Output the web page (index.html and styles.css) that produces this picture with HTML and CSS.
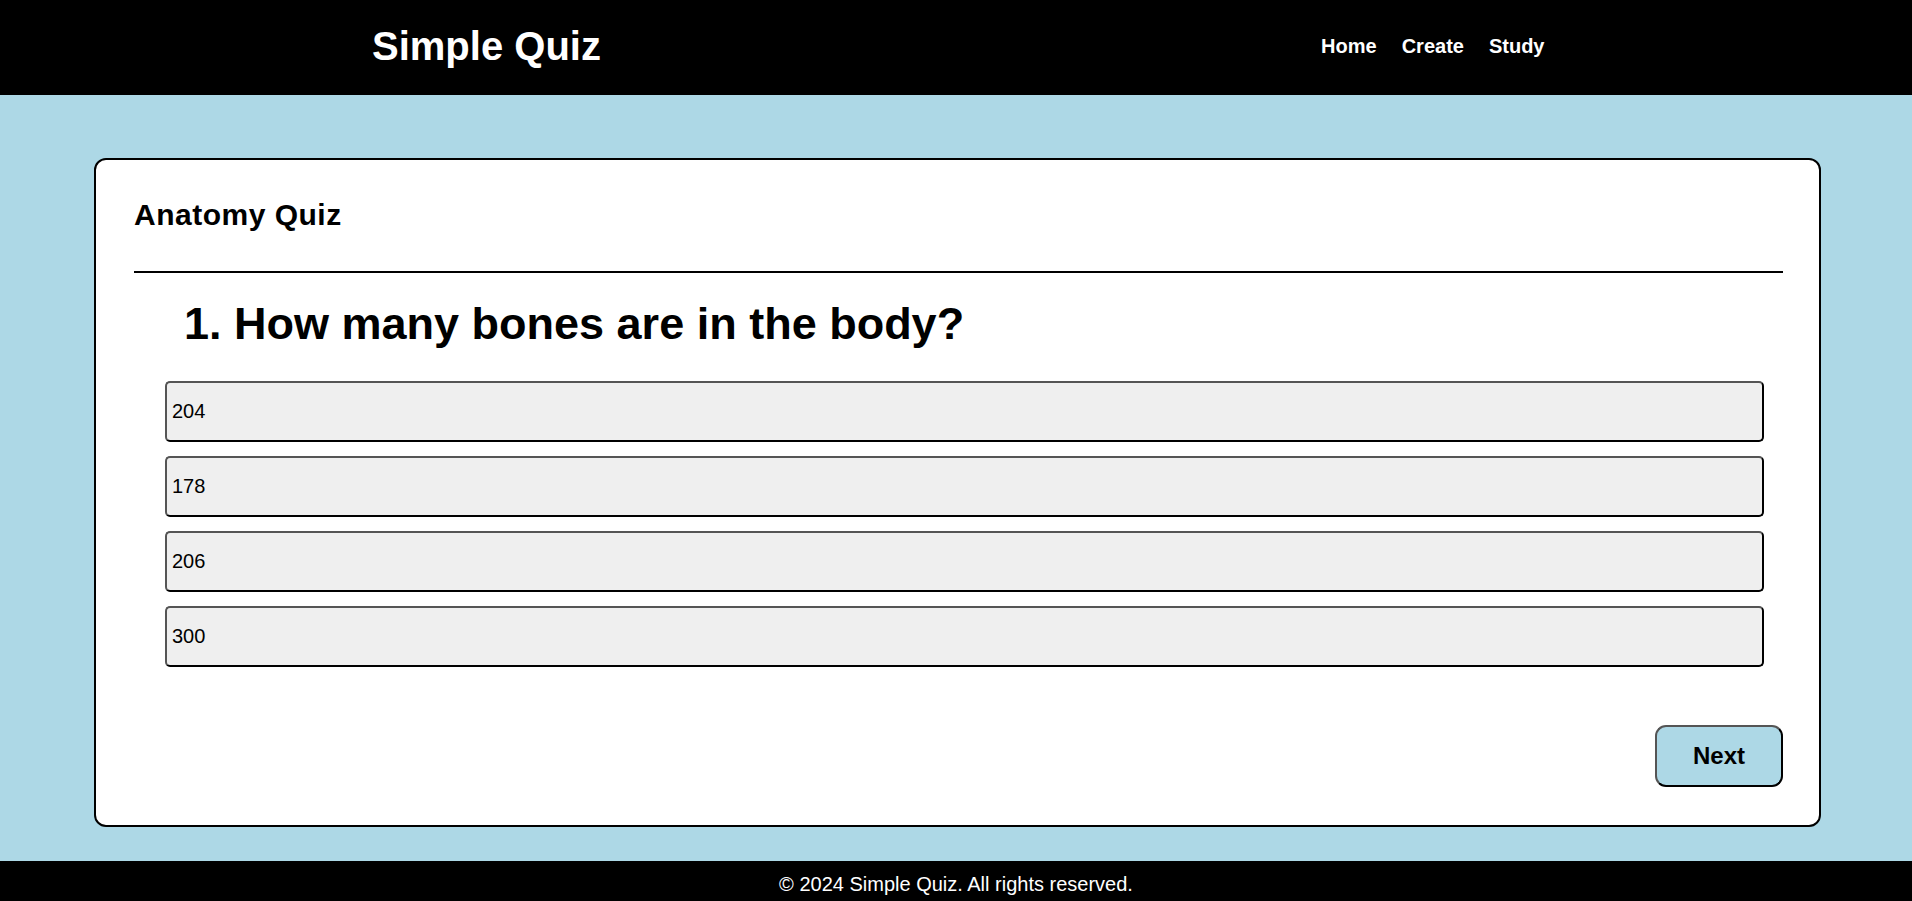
FILE: index.html
```html
<!DOCTYPE html>
<html lang="en">
<head>
<meta charset="utf-8">
<title>Simple Quiz</title>
<link rel="stylesheet" href="styles.css">
</head>
<body>
<header class="site-header">
  <h1 class="brand">Simple Quiz</h1>
  <nav class="nav">
    <a href="#" class="nav-link">Home</a>
    <a href="#" class="nav-link">Create</a>
    <a href="#" class="nav-link">Study</a>
  </nav>
</header>
<main class="main">
  <section class="card">
    <div class="card-head">
      <h2 class="quiz-title">Anatomy Quiz</h2>
    </div>
    <h1 class="question">1. How many bones are in the body?</h1>
    <div class="options">
      <button class="option">204</button>
      <button class="option">178</button>
      <button class="option">206</button>
      <button class="option">300</button>
    </div>
    <div class="actions">
      <button class="next">Next</button>
    </div>
  </section>
</main>
<footer class="site-footer">
  <p class="copy">© 2024 Simple Quiz. All rights reserved.</p>
</footer>
</body>
</html>
```
FILE: styles.css
```css
* { box-sizing: border-box; }

html, body {
  margin: 0;
  padding: 0;
}

body {
  font-family: "Liberation Sans", Arial, sans-serif;
  background: #add8e6;
  color: #000;
}

.site-header {
  background: #000;
  height: 95px;
  padding: 0 367.5px 4px 372px;
  display: flex;
  align-items: center;
  justify-content: space-between;
}

.brand {
  margin: 0;
  color: #fff;
  font-size: 40px;
  font-weight: bold;
  line-height: 46px;
}

.nav {
  display: flex;
  gap: 25px;
  margin-top: 2px;
}

.nav-link {
  color: #fff;
  text-decoration: none;
  font-size: 20px;
  font-weight: bold;
  line-height: 23px;
}

.main {
  padding: 63px 91px 34px 94px;
}

.card {
  background: #fff;
  border: 2px solid #000;
  border-radius: 12px;
  padding: 37px 36px 38px 38px;
}

.card-head {
  padding-top: 1px;
  padding-bottom: 39px;
  border-bottom: 2px solid #000;
}

.quiz-title {
  margin: 0;
  font-size: 30px;
  line-height: 34px;
  letter-spacing: 0.5px;
  font-weight: bold;
}

.question {
  margin: 25px 0 0;
  padding-left: 50px;
  font-size: 45px;
  line-height: 52px;
  font-weight: bold;
}

.options {
  margin: 31px 19px 0 31px;
  display: flex;
  flex-direction: column;
  gap: 14.5px;
}

.option {
  height: 60.5px;
  width: 100%;
  background: #efefef;
  border: 2px solid;
  border-color: #555 #000 #000 #555;
  border-radius: 5px;
  padding: 0 5px;
  text-align: left;
  font-family: "Liberation Sans", Arial, sans-serif;
  font-size: 20px;
  color: #000;
}

.actions {
  margin-top: 58.5px;
  display: flex;
  justify-content: flex-end;
}

.next {
  height: 61.5px;
  padding: 0 36px;
  background: #add8e6;
  border: 2px solid;
  border-color: #555 #000 #000 #555;
  border-radius: 11px;
  font-family: "Liberation Sans", Arial, sans-serif;
  font-size: 24px;
  font-weight: bold;
  color: #000;
}

.site-footer {
  background: #000;
  padding: 12.5px 0;
}

.copy {
  margin: 0;
  color: #fff;
  text-align: center;
  font-size: 20px;
  line-height: 23px;
}
```
